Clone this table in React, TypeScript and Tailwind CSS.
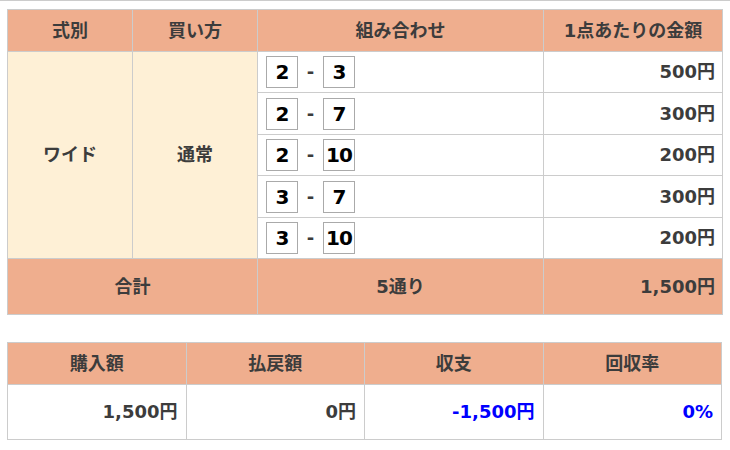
import React from 'react'

const bets = [
  { a: '2', b: '3', amount: '500円' },
  { a: '2', b: '7', amount: '300円' },
  { a: '2', b: '10', amount: '200円' },
  { a: '3', b: '7', amount: '300円' },
  { a: '3', b: '10', amount: '200円' },
]

const rowHeights = ['h-[41px]', 'h-[42px]', 'h-[41px]', 'h-[42px]', 'h-[41px]']

const font = { fontFamily: '"DejaVu Sans", "Noto Sans CJK JP", sans-serif' }

function NumBox({ n }: { n: string }) {
  return (
    <span className="inline-flex w-[32px] h-[32px] items-center justify-center border border-[#aaaaaa] bg-white text-black text-[20px] font-bold tracking-[-1px]">
      {n}
    </span>
  )
}

export default function App() {
  const th = 'border border-[#cccccc] bg-[#efae8e] font-bold text-center'
  return (
    <div className="w-[730px] h-[450px] bg-white text-[#3c3c3c] text-[18px] leading-none border-t border-[#cccccc]" style={font}>
      <div className="pl-[7px] pt-[8px]">
        <table className="border-collapse w-[715px] table-fixed">
          <colgroup>
            <col className="w-[125px]" />
            <col className="w-[125px]" />
            <col className="w-[286px]" />
            <col className="w-[179px]" />
          </colgroup>
          <thead>
            <tr className="h-[42px]">
              <th className={th}>式別</th>
              <th className={th}>買い方</th>
              <th className={th}>組み合わせ</th>
              <th className={th}>1点あたりの金額</th>
            </tr>
          </thead>
          <tbody>
            {bets.map((b, i) => (
              <tr key={i} className={rowHeights[i]}>
                {i === 0 && (
                  <>
                    <td rowSpan={5} className="border border-[#cccccc] bg-[#fef0d6] text-center font-bold">ワイド</td>
                    <td rowSpan={5} className="border border-[#cccccc] bg-[#fef0d6] text-center font-bold">通常</td>
                  </>
                )}
                <td className="border border-[#cccccc] px-[8px] py-0">
                  <div className="flex items-center">
                    <NumBox n={b.a} />
                    <span className="w-[25px] text-center font-bold">-</span>
                    <NumBox n={b.b} />
                  </div>
                </td>
                <td className="border border-[#cccccc] text-right pr-[7px] font-bold">{b.amount}</td>
              </tr>
            ))}
            <tr className="h-[56px]">
              <td colSpan={2} className={th}>合計</td>
              <td className={th}>5通り</td>
              <td className="border border-[#cccccc] bg-[#efae8e] font-bold text-right pr-[7px]">1,500円</td>
            </tr>
          </tbody>
        </table>

        <table className="border-collapse w-[715px] table-fixed mt-[27px]">
          <thead>
            <tr className="h-[42px]">
              <th className={th}>購入額</th>
              <th className={th}>払戻額</th>
              <th className={th}>収支</th>
              <th className={th}>回収率</th>
            </tr>
          </thead>
          <tbody>
            <tr className="h-[55px]">
              <td className="border border-[#cccccc] text-right pr-[8px] font-bold">1,500円</td>
              <td className="border border-[#cccccc] text-right pr-[8px] font-bold">0円</td>
              <td className="border border-[#cccccc] text-right pr-[8px] font-bold text-[#0000ff]">-1,500円</td>
              <td className="border border-[#cccccc] text-right pr-[8px] font-bold text-[#0000ff]">0%</td>
            </tr>
          </tbody>
        </table>
      </div>
    </div>
  )
}
